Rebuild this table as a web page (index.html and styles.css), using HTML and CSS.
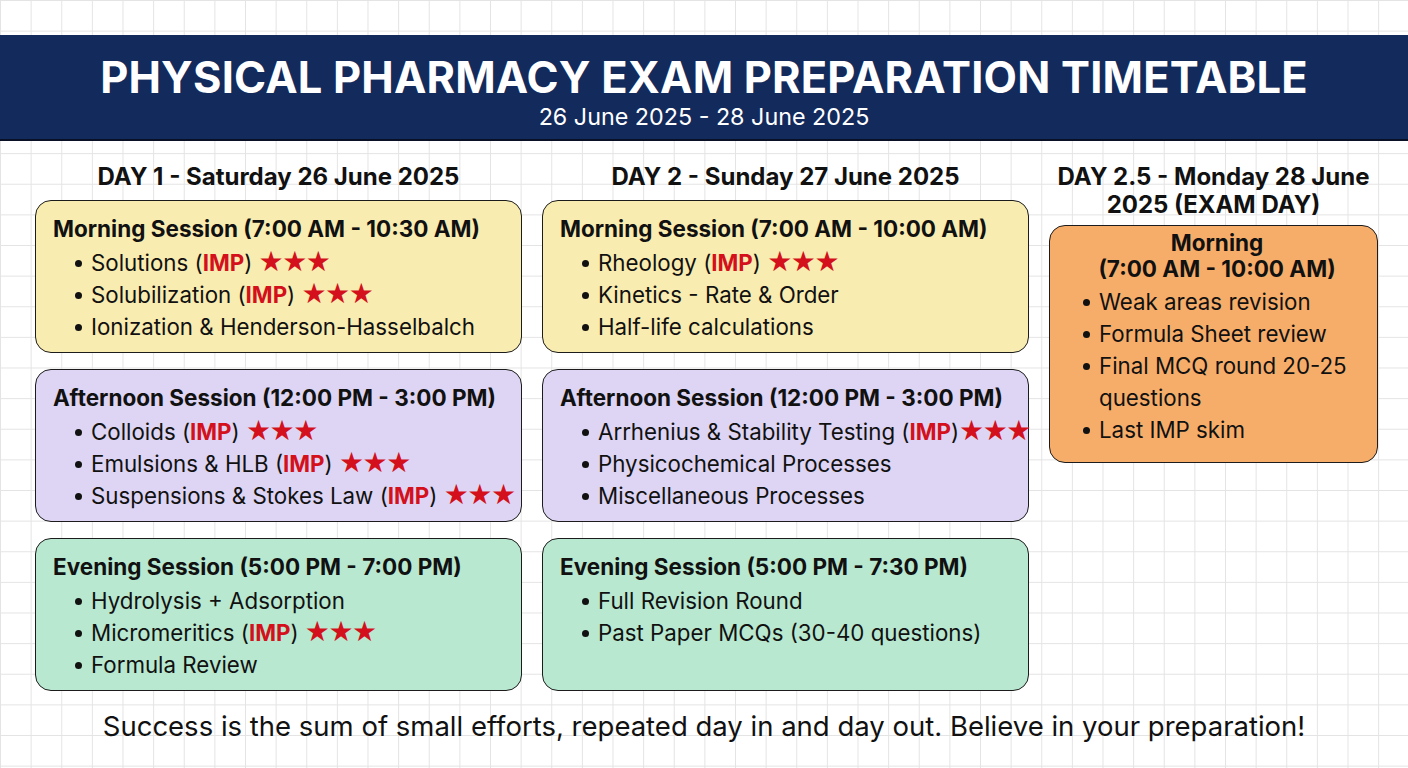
FILE: index.html
```html
<!DOCTYPE html>
<html lang="en">
<head>
<meta charset="utf-8">
<title>Physical Pharmacy Exam Preparation Timetable</title>
<link rel="stylesheet" href="styles.css">
</head>
<body>
<header class="banner">
  <h1 class="banner-title">PHYSICAL PHARMACY EXAM PREPARATION TIMETABLE</h1>
  <p class="banner-sub">26 June 2025 - 28 June 2025</p>
</header>

<main class="days">
  <section class="day day-wide">
    <h2 class="day-title">DAY 1 - Saturday 26 June 2025</h2>
    <div class="card card-yellow">
      <h3 class="card-title">Morning Session (7:00 AM - 10:30 AM)</h3>
      <ul class="items">
        <li>Solutions (<b class="imp">IMP</b>) <span class="stars">★★★</span></li>
        <li>Solubilization (<b class="imp">IMP</b>) <span class="stars">★★★</span></li>
        <li>Ionization &amp; Henderson-Hasselbalch</li>
      </ul>
    </div>
    <div class="card card-purple">
      <h3 class="card-title">Afternoon Session (12:00 PM - 3:00 PM)</h3>
      <ul class="items">
        <li>Colloids (<b class="imp">IMP</b>) <span class="stars">★★★</span></li>
        <li>Emulsions &amp; HLB (<b class="imp">IMP</b>) <span class="stars">★★★</span></li>
        <li>Suspensions &amp; Stokes Law (<b class="imp">IMP</b>) <span class="stars">★★★</span></li>
      </ul>
    </div>
    <div class="card card-green">
      <h3 class="card-title">Evening Session (5:00 PM - 7:00 PM)</h3>
      <ul class="items">
        <li>Hydrolysis + Adsorption</li>
        <li>Micromeritics (<b class="imp">IMP</b>) <span class="stars">★★★</span></li>
        <li>Formula Review</li>
      </ul>
    </div>
  </section>

  <section class="day day-wide">
    <h2 class="day-title">DAY 2 - Sunday 27 June 2025</h2>
    <div class="card card-yellow">
      <h3 class="card-title">Morning Session (7:00 AM - 10:00 AM)</h3>
      <ul class="items">
        <li>Rheology (<b class="imp">IMP</b>) <span class="stars">★★★</span></li>
        <li>Kinetics - Rate &amp; Order</li>
        <li>Half-life calculations</li>
      </ul>
    </div>
    <div class="card card-purple">
      <h3 class="card-title">Afternoon Session (12:00 PM - 3:00 PM)</h3>
      <ul class="items">
        <li>Arrhenius &amp; Stability Testing (<b class="imp">IMP</b>)<span class="stars">★★★</span></li>
        <li>Physicochemical Processes</li>
        <li>Miscellaneous Processes</li>
      </ul>
    </div>
    <div class="card card-green">
      <h3 class="card-title">Evening Session (5:00 PM - 7:30 PM)</h3>
      <ul class="items">
        <li>Full Revision Round</li>
        <li>Past Paper MCQs (30-40 questions)</li>
      </ul>
    </div>
  </section>

  <section class="day day-narrow">
    <h2 class="day-title">DAY 2.5 - Monday 28 June<br>2025 (EXAM DAY)</h2>
    <div class="card card-orange">
      <h3 class="card-title card-title-center">Morning<br>(7:00 AM - 10:00 AM)</h3>
      <ul class="items items-wrap">
        <li>Weak areas revision</li>
        <li>Formula Sheet review</li>
        <li>Final MCQ round 20-25 questions</li>
        <li>Last IMP skim</li>
      </ul>
    </div>
  </section>
</main>

<footer class="quote">Success is the sum of small efforts, repeated day in and day out. Believe in your preparation!</footer>
</body>
</html>
```

FILE: styles.css
```css
* { box-sizing: border-box; }

html, body {
  margin: 0;
  padding: 0;
}

body {
  width: 1408px;
  height: 768px;
  overflow: hidden;
  font-family: Inter, "Noto Sans", "Liberation Sans", sans-serif;
  color: #111111;
  background-color: #ffffff;
  background-image:
    linear-gradient(to right, #e4e4e4 1px, transparent 1px),
    linear-gradient(to bottom, #e4e4e4 1px, transparent 1px);
  background-size: 30.64px 30.64px;
  background-position: 0 0;
}

.banner {
  margin-top: 35px;
  height: 106px;
  background: #132a5c;
  border-bottom: 2px solid #0a1126;
  text-align: center;
  color: #ffffff;
  padding-top: 16px;
}

.banner-title {
  margin: 0;
  font-size: 43.4px;
  font-weight: 700;
  line-height: 52px;
  letter-spacing: 0.2px;
}

.banner-sub {
  margin: 0;
  font-size: 23.3px;
  font-weight: 400;
  line-height: 28px;
}

.days {
  display: grid;
  grid-template-columns: 487px 487px 329px;
  column-gap: 20px;
  padding-left: 35px;
  margin-top: 22px;
  align-items: start;
}

.day {
  display: flex;
  flex-direction: column;
  gap: 16px;
}

.day-title {
  margin: 0 0 -7px;
  text-align: center;
  font-size: 24px;
  font-weight: 700;
  line-height: 27.5px;
  color: #111111;
}

.card {
  border: 1.5px solid #1c1c1c;
  border-radius: 16px;
  padding: 12px 0 8px 17px;
  height: 153px;
}

.card-yellow { background: #f9ecb0; }
.card-purple { background: #ddd5f3; }
.card-green { background: #b8e8d0; }
.card-orange {
  background: #f7ad6a;
  height: 238px;
  margin-top: -2px;
  padding: 4px 4px 8px 11px;
}

.card-title {
  margin: 0 0 2px;
  font-size: 22.5px;
  font-weight: 700;
  line-height: 32px;
  white-space: nowrap;
}

.card-title-center {
  text-align: center;
  line-height: 26px;
  margin-bottom: 4px;
}

.items {
  list-style: none;
  margin: 0;
  padding: 0 0 0 38px;
}

.items li {
  position: relative;
  font-size: 22.3px;
  line-height: 32px;
  font-weight: 400;
  white-space: nowrap;
}

.items-wrap li { white-space: normal; }

.items li::before {
  content: "";
  position: absolute;
  left: -16px;
  top: 13px;
  width: 7px;
  height: 7px;
  border-radius: 50%;
  background: #111111;
}

.imp {
  color: #d3101b;
  font-weight: 700;
}

.stars {
  color: #d3101b;
  font-family: "DejaVu Sans", sans-serif;
  font-size: 28px;
  line-height: 0;
  letter-spacing: -1.5px;
}

.quote {
  margin-top: 19px;
  text-align: center;
  font-size: 27.5px;
  line-height: 32px;
  color: #111111;
}
```
